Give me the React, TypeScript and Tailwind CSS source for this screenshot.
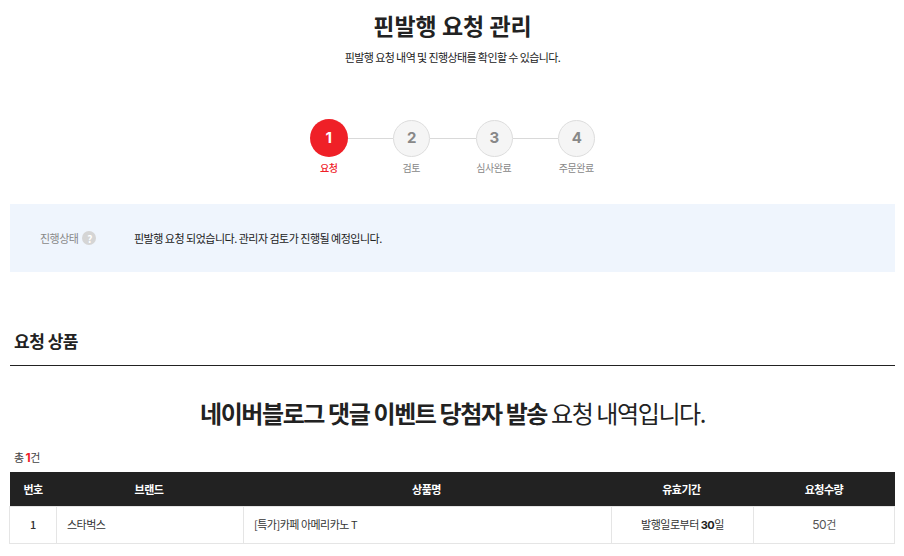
const FONT = "font-['Noto_Sans_CJK_KR','Noto_Sans',sans-serif]";

const STEPS = ["요청", "검토", "심사완료", "주문완료"];

const StepCircle = ({ n, active }: { n: number; active: boolean }) => (
  <div
    className={
      active
        ? "w-[38px] h-[38px] shrink-0 rounded-full bg-[#ef2027] text-white flex items-center justify-center text-[15px] font-bold font-['Inter',sans-serif]"
        : "w-[37px] h-[37px] shrink-0 rounded-full bg-[#f5f5f5] border border-[#dddddd] text-[#888888] flex items-center justify-center text-[15px] font-bold font-['Inter',sans-serif]"
    }
  >
    {n}
  </div>
);

const Stepper = () => (
  <div className="mt-[53px] flex flex-col items-center">
    <div className="flex items-center pl-[1px]">
      {STEPS.map((_, i) => (
        <div key={i} className="flex items-center">
          {i > 0 && <div className="w-[45.5px] h-px bg-[#d9d9d9]" />}
          <StepCircle n={i + 1} active={i === 0} />
        </div>
      ))}
    </div>
    <div className="flex mt-[3px] pl-[1px]">
      {STEPS.map((label, i) => (
        <div
          key={label}
          className={
            i === 0
              ? "w-[82.5px] text-center text-[10px] leading-[16px] tracking-[-0.5px] font-medium text-[#ef2027]"
              : "w-[82.5px] text-center text-[10px] leading-[16px] tracking-[-0.5px] text-[#888888]"
          }
        >
          {label}
        </div>
      ))}
    </div>
  </div>
);

const App = () => {
  return (
    <div className={`${FONT} w-[904px] h-[556px] overflow-hidden bg-white text-[#222222]`}>
      {/* Title */}
      <h1 className="pt-[8px] pl-[1px] text-center text-[23px] leading-[34px] font-bold">핀발행 요청 관리</h1>
      <p className="mt-[6px] pl-[1px] text-center text-[11px] leading-[18px] tracking-[-0.6px]">
        핀발행 요청 내역 및 진행상태를 확인할 수 있습니다.
      </p>

      <Stepper />

      <div className="px-[9px]">
        {/* Status */}
        <div className="mt-[28px] ml-[1px] h-[68px] bg-[#eff5fd] flex items-center pl-[30px] text-[11px] tracking-[-0.5px]">
          <div className="w-[94px] flex items-center gap-[4px] text-[#888888]">
            진행상태
            <span className="w-[14px] h-[14px] rounded-full bg-[#d5d5d5] text-white text-[10px] font-bold flex items-center justify-center">
              ?
            </span>
          </div>
          <div>핀발행 요청 되었습니다. 관리자 검토가 진행될 예정입니다.</div>
        </div>

        {/* Section */}
        <h2 className="mt-[56px] ml-[5px] text-[17px] leading-[26px] font-bold tracking-[-0.5px]">요청 상품</h2>
        <div className="mt-[11px] ml-[1px] h-px bg-[#222222]" />

        <p className="mt-[30px] text-center text-[24px] leading-[34px] tracking-[-1.4px] pl-[1px]">
          <b className="font-bold">네이버블로그 댓글 이벤트 당첨자 발송</b> 요청 내역입니다.
        </p>

        <p className="mt-[18px] ml-[5px] text-[11px] leading-[18px] tracking-[-0.5px] text-[#444444]">
          총 <span className="text-[#ef2027] text-[12px] font-bold font-['Inter',sans-serif]">1</span>건
        </p>

        {/* Table */}
        <table className="mt-[5px] w-[885px] table-fixed border-collapse text-[11px] tracking-[-0.5px]">
          <colgroup>
            <col className="w-[47px]" />
            <col className="w-[187px]" />
            <col className="w-[368px]" />
            <col className="w-[142px]" />
            <col className="w-[141px]" />
          </colgroup>
          <thead>
            <tr className="h-[34px] bg-[#222222] text-white font-bold">
              <th className="font-bold">번호</th>
              <th className="font-bold pr-[2px]">브랜드</th>
              <th className="font-bold pr-[2px]">상품명</th>
              <th className="font-bold pr-[2px]">유효기간</th>
              <th className="font-bold">요청수량</th>
            </tr>
          </thead>
          <tbody>
            <tr className="h-[37px] text-[#333333]">
              <td className="border border-[#e5e5e5] text-center font-medium">1</td>
              <td className="border border-[#e5e5e5] pl-[10px]">스타벅스</td>
              <td className="border border-[#e5e5e5] pl-[10px]">[특가]카페 아메리카노 T</td>
              <td className="border border-[#e5e5e5] text-center">
                발행일로부터 <b className="font-bold text-[#222222] font-['Inter',sans-serif]">30</b>일
              </td>
              <td className="border border-[#e5e5e5] text-center text-[#555555]">
                <span className="font-['Inter',sans-serif] text-[12px]">50</span>건
              </td>
            </tr>
          </tbody>
        </table>
      </div>
    </div>
  );
};

export default App;
